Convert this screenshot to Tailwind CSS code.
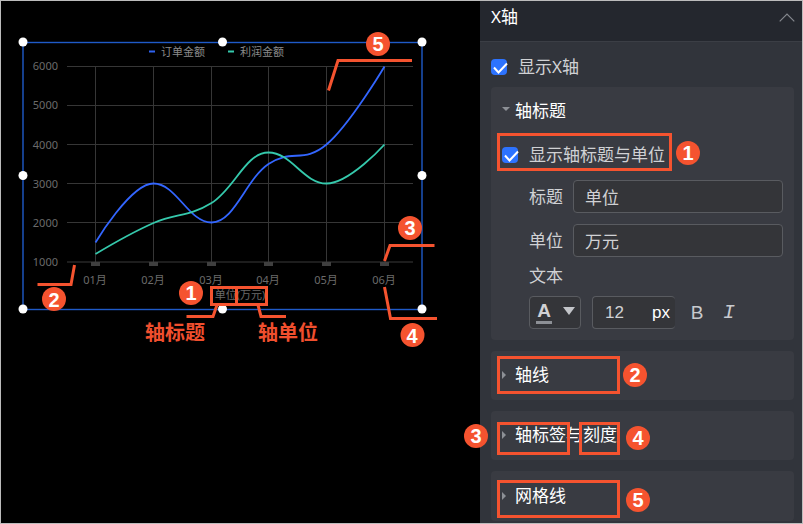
<!DOCTYPE html>
<html lang="zh-CN">
<head>
  <meta charset="UTF-8">
  <meta name="viewport" content="width=device-width, initial-scale=1.0">
  <title>X轴</title>
  <script src="https://cdn.jsdelivr.net/npm/@tailwindcss/browser@4"></script>
</head>
<body class="bg-black">
<main class="flex min-h-screen border border-[#bcbcbc] bg-black font-['Noto_Sans','Noto_Sans_CJK_SC',sans-serif] text-[17px] leading-6">

  <!-- ========== CHART ========== -->
  <section class="min-w-0 flex-1">
    <svg viewBox="1 1 479 522" class="block w-full" role="img" aria-label="订单金额 / 利润金额">

      <!-- Grid -->
      <g fill="none" stroke="#363636" stroke-width="1">
        <path d="M67 66.5H413M67 105.5H413M67 144.5H413M67 183.5H413M67 222.5H413"/>
        <path d="M95.5 66V262M153.5 66V262M211.5 66V262M268.5 66V262M326.5 66V262M384.5 66V262"/>
        <path d="M67 262H413" stroke="#3a3a3a"/>
      </g>
      <path d="M91 264h9M149 264h9M207 264h9M264 264h9M322 264h9M380 264h9" stroke="#3f3f3f" stroke-width="4"/>

      <!-- Legend -->
      <path d="M149 51.5h6" stroke="#2f62f0" stroke-width="2"/>
      <path d="M228 51.5h6" stroke="#35c9ac" stroke-width="2"/>
      <g class="text-[11px]" fill="#8a8a8a">
        <text x="161" y="56">订单金额</text>
        <text x="240" y="56">利润金额</text>
      </g>

      <!-- Axis labels -->
      <g class="text-[11px]" fill="#6b6b6b" text-anchor="end">
        <text x="58" y="70">6000</text>
        <text x="58" y="109">5000</text>
        <text x="58" y="149">4000</text>
        <text x="58" y="188">3000</text>
        <text x="58" y="227">2000</text>
        <text x="58" y="266">1000</text>
      </g>
      <g class="text-[11px]" fill="#6b6b6b" text-anchor="middle">
        <text x="95" y="284">01月</text>
        <text x="153" y="284">02月</text>
        <text x="211" y="284">03月</text>
        <text x="268" y="284">04月</text>
        <text x="326" y="284">05月</text>
        <text x="384" y="284">06月</text>
        <text x="240" y="299">单位(万元)</text>
      </g>

      <!-- Series -->
      <g fill="none" stroke-width="1.8">
        <path stroke="#3366ff" d="M95.5 242.5C95.5 242.5 130.5 183.5 153.5 183.5S188.5 222.5 211.5 222.5S245.5 179.6 268.5 164S303.5 163.9 326.5 144.5S384.5 66.5 384.5 66.5"/>
        <path stroke="#35c9ac" d="M95.5 254C95.5 254 130.5 233.1 153.5 223S188.5 217.2 211.5 203S245.5 152.5 268.5 152.5S303.5 183.5 326.5 183.5S384.5 144.5 384.5 144.5"/>
      </g>

      <!-- Selection frame -->
      <rect x="23" y="42.5" width="399" height="267" fill="none" stroke="#1f5ac8" stroke-width="1.4"/>
      <g fill="#ffffff">
        <circle cx="23" cy="42" r="4.5"/><circle cx="222.5" cy="42" r="4.5"/><circle cx="422" cy="42" r="4.5"/>
        <circle cx="23" cy="175.5" r="4.5"/><circle cx="422" cy="175.5" r="4.5"/>
        <circle cx="23" cy="309" r="4.5"/><circle cx="222.5" cy="309" r="4.5"/><circle cx="422" cy="309" r="4.5"/>
      </g>

      <!-- Callouts -->
      <g fill="none" stroke="#f5532f" stroke-width="3">
        <path d="M328.500 90.500L338 60.500H412"/>
        <path d="M37.500 284.500H71L74.500 265"/>
        <path d="M186.500 316.500H213L217 305"/>
        <path d="M258 305L261 316.500H286"/>
        <path d="M384.500 261L390 245.500H434.500"/>
        <path d="M384.500 287L390.500 318.500H437"/>
        <path d="M211.500 287.500H266.500V304.500H211.500ZM236.500 287.500V304.500"/>
      </g>
      <g fill="#f5532f">
        <circle cx="378" cy="44" r="12"/><circle cx="54" cy="299" r="12"/><circle cx="191" cy="293" r="12"/>
        <circle cx="410" cy="228" r="12"/><circle cx="412.5" cy="335" r="12"/>
      </g>
      <g class="font-['Liberation_Sans',sans-serif] text-[20px] font-bold" fill="#ffffff" text-anchor="middle">
        <text x="378" y="51">5</text>
        <text x="54" y="307">2</text>
        <text x="191" y="300">1</text>
        <text x="410" y="235">3</text>
        <text x="412" y="343">4</text>
      </g>
      <g class="text-[20px] font-bold" fill="#f04f2e">
        <text x="145" y="340">轴标题</text>
        <text x="258" y="340">轴单位</text>
      </g>
    </svg>
  </section>

  <!-- ========== SETTINGS PANEL ========== -->
  <aside class="w-[322px] shrink-0 bg-[#31343b] text-[#d0d1d4]">

    <header class="flex h-[41px] items-start justify-between border-b border-[#3b3e45] bg-[#24272e] pt-1 pr-[7px] pl-[11px]">
      <h1 class="text-white">X轴</h1>
      <button type="button" aria-label="收起" class="pt-2">
        <svg viewBox="0 0 16 9" class="h-[9px] w-4" fill="none" stroke="#85888e" stroke-width="1.2"><path d="M.7 8.300L8 1L15.300 8.300"/></svg>
      </button>
    </header>

    <label class="flex items-center gap-[11px] pt-[13px] pb-2 pl-[11px]">
      <span class="relative flex size-4">
        <input type="checkbox" checked class="size-4 appearance-none rounded-sm bg-[#2d73ff]">
        <svg viewBox="0 0 16 16" class="pointer-events-none absolute inset-0 size-4 overflow-visible" fill="none" stroke="#ffffff" stroke-width="2"><path d="M3 8.500L7.500 13.500L16 4.500"/></svg>
      </span>
      <span>显示X轴</span>
    </label>

    <div class="space-y-[11px] pr-2 pl-[11px]">
      <!-- Axis title -->
      <section class="relative rounded-sm bg-[#393b42] px-[11px] pt-3 pb-[11px]">
        <h2 class="text-white">
          <button type="button" class="flex items-center gap-[5px]">
            <svg viewBox="0 0 8 4" class="mb-1 h-1 w-2" fill="#8d9096"><path d="M0 0H8L4 4Z"/></svg>
            <span>轴标题</span>
          </button>
        </h2>

        <label class="mt-5 flex items-center gap-[11px]">
          <span class="relative flex size-4">
            <input type="checkbox" checked class="size-4 appearance-none rounded-sm bg-[#2d73ff]">
            <svg viewBox="0 0 16 16" class="pointer-events-none absolute inset-0 size-4 overflow-visible" fill="none" stroke="#ffffff" stroke-width="2"><path d="M3 8.500L7.500 13.500L16 4.500"/></svg>
          </span>
          <span>显示轴标题与单位</span>
        </label>

        <div class="mt-[13px] ml-[27px] space-y-[11px]">
          <div class="flex items-center gap-[10px]">
            <label for="axis-title" class="shrink-0">标题</label>
            <input id="axis-title" type="text" value="单位" class="h-[33px] w-full min-w-0 rounded-sm border border-[#595b60] bg-[#343539] px-[11px]">
          </div>
          <div class="flex items-center gap-[10px]">
            <label for="axis-unit" class="shrink-0">单位</label>
            <input id="axis-unit" type="text" value="万元" class="h-[33px] w-full min-w-0 rounded-sm border border-[#595b60] bg-[#343539] px-[11px]">
          </div>
        </div>

        <div class="mt-[7px] ml-[27px]">
          <label for="font-size">文本</label>
          <div class="mt-2 flex items-center font-['Liberation_Sans','Noto_Sans_CJK_SC',sans-serif]">
            <button type="button" aria-label="文本颜色" class="flex h-[33px] w-[52px] items-center justify-between rounded-sm border border-[#595b60] bg-[#343539] pr-[5px] pl-[6px]">
              <span class="w-4 border-b-3 border-[#8d9096] text-center text-[19px] leading-5 font-bold">A</span>
              <svg viewBox="0 0 12 8" class="mb-1 h-2 w-3" fill="#c3c5c9"><path d="M0 0H12L6 8Z"/></svg>
            </button>
            <div class="ml-[11px] flex h-[33px] w-[83px] items-center rounded-sm border border-r-0 border-[#595b60] bg-[#343539] pr-[5px]">
              <input id="font-size" type="text" value="12" class="w-full min-w-0 pl-3">
              <span class="text-white">px</span>
            </div>
            <button type="button" aria-label="粗体" class="ml-3 w-5 text-center text-[19px] text-[#c8cace]">B</button>
            <button type="button" aria-label="斜体" class="ml-3 w-5 text-center font-['Liberation_Mono',monospace] text-[20px] text-[#c8cace] italic">I</button>
          </div>
        </div>

        <div class="pointer-events-none absolute top-[46px] left-[6px] h-[38px] w-[175px] border-3 border-[#f5532f]"></div>
        <span class="absolute top-[54px] left-[185px] flex size-6 items-center justify-center rounded-full bg-[#f5532f] font-['Liberation_Sans',sans-serif] text-[20px] font-bold text-white">1</span>
      </section>

      <!-- Axis line -->
      <section class="relative rounded-sm bg-[#393b42] px-[11px] pt-3 pb-[13px]">
        <h2 class="text-white">
          <button type="button" class="flex items-center gap-[9px]">
            <svg viewBox="0 0 4 8" class="h-2 w-1" fill="#8d9096"><path d="M0 0V8L4 4Z"/></svg>
            <span>轴线</span>
          </button>
        </h2>
        <div class="pointer-events-none absolute top-[5px] left-[6px] h-[38px] w-[123px] border-3 border-[#f5532f]"></div>
        <span class="absolute top-3 left-[132px] flex size-6 items-center justify-center rounded-full bg-[#f5532f] font-['Liberation_Sans',sans-serif] text-[20px] font-bold text-white">2</span>
      </section>

      <!-- Axis labels and ticks -->
      <section class="relative rounded-sm bg-[#393b42] px-[11px] pt-3 pb-[13px]">
        <h2 class="text-white">
          <button type="button" class="flex items-center gap-[9px]">
            <svg viewBox="0 0 4 8" class="h-2 w-1" fill="#8d9096"><path d="M0 0V8L4 4Z"/></svg>
            <span>轴标签与刻度</span>
          </button>
        </h2>
        <div class="pointer-events-none absolute top-[11px] left-[6px] h-[33px] w-[73px] border-3 border-[#f5532f]"></div>
        <div class="pointer-events-none absolute top-[11px] left-[88px] h-[33px] w-[41px] border-3 border-[#f5532f]"></div>
        <span class="absolute top-[13px] -left-[27px] flex size-6 items-center justify-center rounded-full bg-[#f5532f] font-['Liberation_Sans',sans-serif] text-[20px] font-bold text-white">3</span>
        <span class="absolute top-[15px] left-[135px] flex size-6 items-center justify-center rounded-full bg-[#f5532f] font-['Liberation_Sans',sans-serif] text-[20px] font-bold text-white">4</span>
      </section>

      <!-- Grid lines -->
      <section class="relative rounded-sm bg-[#393b42] px-[11px] py-[13px]">
        <h2 class="text-white">
          <button type="button" class="flex items-center gap-[9px]">
            <svg viewBox="0 0 4 8" class="h-2 w-1" fill="#8d9096"><path d="M0 0V8L4 4Z"/></svg>
            <span>网格线</span>
          </button>
        </h2>
        <div class="pointer-events-none absolute top-[9px] left-[6px] h-[38px] w-[123px] border-3 border-[#f5532f]"></div>
        <span class="absolute top-[17px] left-[135px] flex size-6 items-center justify-center rounded-full bg-[#f5532f] font-['Liberation_Sans',sans-serif] text-[20px] font-bold text-white">5</span>
      </section>
    </div>
  </aside>
</main>
</body>
</html>
